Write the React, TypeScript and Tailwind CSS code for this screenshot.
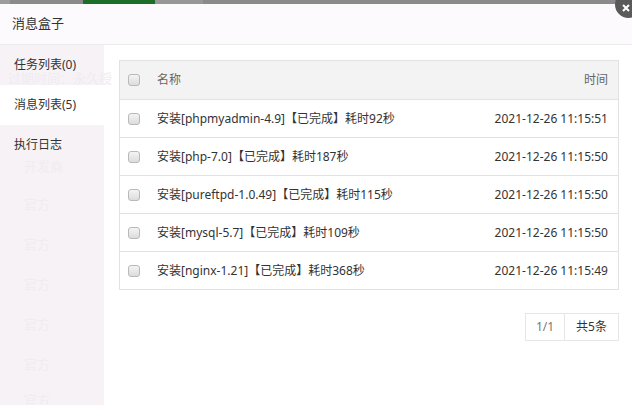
import React from 'react';

const rows = [
    { name: '安装[phpmyadmin-4.9]【已完成】耗时92秒', time: '2021-12-26 11:15:51' },
    { name: '安装[php-7.0]【已完成】耗时187秒', time: '2021-12-26 11:15:50' },
    { name: '安装[pureftpd-1.0.49]【已完成】耗时115秒', time: '2021-12-26 11:15:50' },
    { name: '安装[mysql-5.7]【已完成】耗时109秒', time: '2021-12-26 11:15:50' },
    { name: '安装[nginx-1.21]【已完成】耗时368秒', time: '2021-12-26 11:15:49' },
];

const menu = [
    { label: '任务列表(0)', active: false },
    { label: '消息列表(5)', active: true },
    { label: '执行日志', active: false },
];

const CheckBox = () => (
    <span className="inline-block h-[12px] w-[12px] rounded-[3px] border border-[#b9b9b9] bg-gradient-to-b from-[#f4f4f4] to-[#dcdcdc]" />
);

const App = () => {
    return (
        <div
            className="relative h-[405px] w-[632px] overflow-hidden bg-white text-[12px] text-[#333]"
            style={{ fontFamily: '"Noto Sans", "Noto Sans CJK SC", sans-serif' }}
        >
            {/* page behind the dialog */}
            <div className="flex h-[4px] bg-[#8a8a8a]">
                <div className="w-[10px] bg-[#9c9c9c]" />
                <div className="w-[73px]" />
                <div className="w-[72px] bg-[#1c6e28]" />
                <div className="w-[48px] bg-[#979797]" />
                <div className="flex-1" />
            </div>

            <div className="flex h-[41px] items-center border-b border-[#ececec] bg-[#fdfafd] pl-[12px] text-[13px] text-[#333]">
                消息盒子
            </div>

            <div className="flex h-[360px]">
                <div className="relative w-[104px] shrink-0 bg-[#f6f2f6]">
                    {/* faint text of the page below */}
                    <div className="pointer-events-none absolute inset-0 text-[13px] text-[#f0ecf1]">
                        <div className="absolute left-[8px] top-[24px] whitespace-nowrap">过期时间：永久授</div>
                        <div className="absolute left-[24px] top-[112px]">开发商</div>
                        <div className="absolute left-[24px] top-[150px]">官方</div>
                        <div className="absolute left-[24px] top-[190px]">官方</div>
                        <div className="absolute left-[24px] top-[230px]">官方</div>
                        <div className="absolute left-[24px] top-[270px]">官方</div>
                        <div className="absolute left-[24px] top-[310px]">官方</div>
                        <div className="absolute left-[24px] top-[346px]">官方</div>
                    </div>
                    <div className="relative flex flex-col">
                        {menu.map((m) => (
                            <div
                                key={m.label}
                                className={`flex h-[40px] items-center pl-[14px] text-[12px] text-[#333] ${m.active ? 'bg-white' : ''}`}
                            >
                                {m.label}
                            </div>
                        ))}
                    </div>
                </div>

                <div className="flex flex-1 flex-col pl-[15px] pr-[13px] pt-[15px]">
                    <div className="border border-[#e2e2e2]">
                        <div className="flex h-[38px] items-center bg-[#f3f3f3] text-[#666]">
                            <div className="flex w-[37px] pl-[8px]">
                                <CheckBox />
                            </div>
                            <div className="flex-1">名称</div>
                            <div className="pr-[10px]">时间</div>
                        </div>
                        {rows.map((r) => (
                            <div key={r.name} className="flex h-[38px] items-center border-t border-[#e2e2e2]">
                                <div className="flex w-[37px] pl-[8px]">
                                    <CheckBox />
                                </div>
                                <div className="flex-1 whitespace-nowrap">{r.name}</div>
                                <div className="pr-[10px]">{r.time}</div>
                            </div>
                        ))}
                    </div>

                    <div className="mt-[23px] flex justify-end">
                        <div className="flex h-[28px] border border-[#e6e6e6] text-[12px]">
                            <div className="flex w-[39px] items-center justify-center border-r border-[#e6e6e6] text-[#777]">
                                1/1
                            </div>
                            <div className="flex w-[53px] items-center justify-center text-[#333]">共5条</div>
                        </div>
                    </div>
                </div>
            </div>

            {/* close button */}
            <div className="absolute right-[-10px] top-[-9px] flex h-[27px] w-[27px] items-center justify-center rounded-full bg-[#5a5a5a]">
                <svg width="10" height="10" viewBox="0 0 10 10" className="-translate-x-[3px] translate-y-[3px]">
                    <path d="M2 2 L8 8 M8 2 L2 8" stroke="#fff" strokeWidth="2" />
                </svg>
            </div>
        </div>
    );
};

export default App;
